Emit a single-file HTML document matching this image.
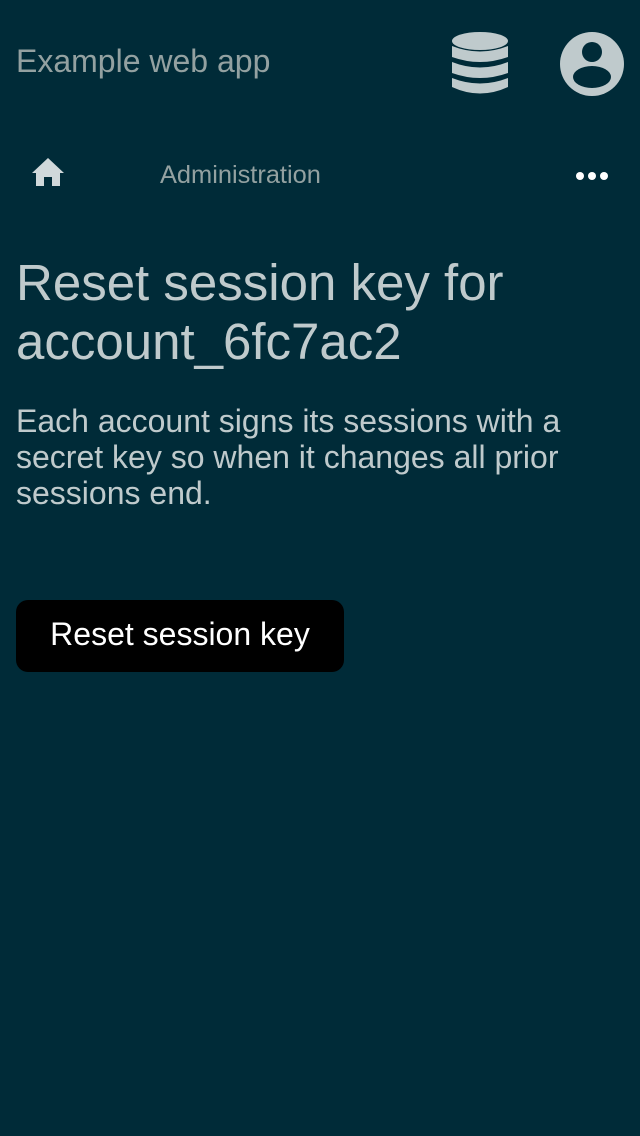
<!DOCTYPE html>
<html><head><style>
body{margin:0;width:640px;height:1136px;background:#002b38;font-family:"Liberation Sans",sans-serif;position:relative;overflow:hidden}
.a{position:absolute}
</style></head><body>
<div class="a" style="left:16px;top:43px;font-size:32px;color:#93a1a1;">Example web app</div>
<svg class="a" style="left:452px;top:32px" width="56" height="64" viewBox="0 0 56 64">
<ellipse cx="28" cy="9" rx="28" ry="9" fill="#bfcacc"/>
<path d="M0 14 Q28 25 56 14 V25 Q28 35 0 25Z" fill="#bfcacc"/>
<path d="M0 30 Q28 41 56 30 V41 Q28 51 0 41Z" fill="#bfcacc"/>
<path d="M0 46 Q28 57 56 46 V55 Q28 68 0 55Z" fill="#bfcacc"/>
</svg>
<svg class="a" style="left:560px;top:32px" width="64" height="64" viewBox="0 0 64 64">
<circle cx="32" cy="32" r="32" fill="#bfcacc"/>
<circle cx="32" cy="20" r="10" fill="#002b38"/>
<ellipse cx="32" cy="45" rx="19" ry="11" fill="#002b38"/>
</svg>
<svg class="a" style="left:32px;top:158px" width="32" height="29" viewBox="0 0 32 29">
<path d="M16 0 L32 15 H28 V28 H20 V19 H12 V28 H4 V15 H0Z" fill="#d0d8da"/>
</svg>
<div class="a" style="left:160px;top:161px;font-size:25.4px;color:#93a1a1;">Administration</div>
<svg class="a" style="left:575px;top:170px" width="34" height="12"><circle cx="5" cy="6" r="4" fill="#fff"/><circle cx="17" cy="6" r="4" fill="#fff"/><circle cx="29" cy="6" r="4" fill="#fff"/></svg>
<div class="a" style="left:16px;top:253px;font-size:51px;line-height:59px;color:#bfcacc;">Reset session key for<br>account_6fc7ac2</div>
<div class="a" style="left:16px;top:403px;font-size:32px;line-height:36px;color:#bfcacc;width:610px">Each account signs its sessions with a secret key so when it changes all prior sessions end.</div>
<div class="a" style="left:16px;top:600px;width:328px;height:72px;background:#000;border-radius:12px;color:#fff;font-size:32px;line-height:68px;text-align:center;">Reset session key</div>
</body></html>
